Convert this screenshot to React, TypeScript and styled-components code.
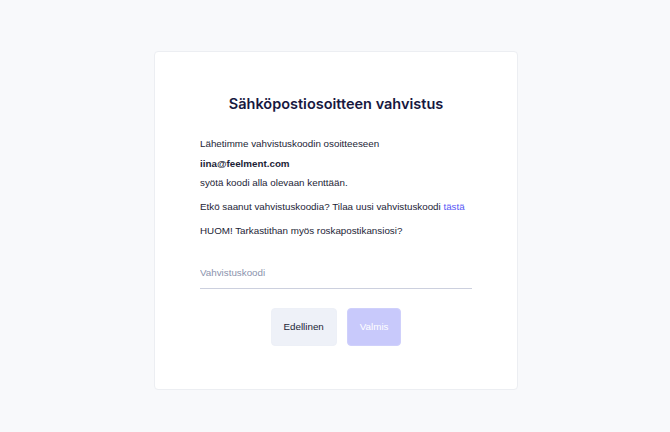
import React, { useState } from "react";
import styled, { createGlobalStyle } from "styled-components";

const GlobalStyle = createGlobalStyle`
    html, body {
        margin: 0;
        padding: 0;
        background: #f8f9fb;
    }
    body {
        font-family: "Liberation Sans", Arial, sans-serif;
    }
`;

const Page = styled.div`
    min-height: 432px;
    display: flex;
    justify-content: center;
    padding: 51px 0 0 2px;
    box-sizing: border-box;
`;

const Card = styled.div`
    width: 364px;
    height: 339px;
    box-sizing: border-box;
    background: #ffffff;
    border: 1px solid #eceef2;
    border-radius: 4px;
    padding: 40px 45px 0 45px;
    display: flex;
    flex-direction: column;
`;

const Title = styled.h1`
    margin: 0 0 18px 0;
    text-align: center;
    font-family: Inter, "Noto Sans", sans-serif;
    font-weight: 600;
    font-size: 14.5px;
    line-height: 24px;
    color: #17183f;
`;

const Paragraph = styled.p`
    margin: 0 0 4.5px 0;
    font-size: 9.8px;
    line-height: 19.5px;
    color: #1c1e36;
`;

const Email = styled.span`
    font-weight: 700;
`;

const Link = styled.a`
    color: #5758f5;
    text-decoration: none;
    cursor: pointer;
`;

const CodeInput = styled.input`
    margin-top: 18px;
    width: 100%;
    box-sizing: border-box;
    border: none;
    border-bottom: 1.5px solid #ccd0de;
    padding: 0 0 6px 0;
    font-family: "Liberation Sans", Arial, sans-serif;
    font-size: 9.8px;
    line-height: 18px;
    height: 25.5px;
    color: #1c1e36;
    outline: none;
    background: transparent;

    &::placeholder {
        color: #8b93ad;
    }
`;

const ButtonRow = styled.div`
    display: flex;
    justify-content: center;
    gap: 10px;
    margin-top: 19px;
`;

const Button = styled.button<{ $primary?: boolean }>`
    height: 38px;
    padding: 0 12px;
    border: 1px solid ${(p) => (p.$primary ? "#cfd0fb" : "#edf0f7")};
    border-radius: 4px;
    background: ${(p) => (p.$primary ? "#c8c9fb" : "#eef1f8")};
    color: ${(p) => (p.$primary ? "#ffffff" : "#1c1e36")};
    font-family: "Liberation Sans", Arial, sans-serif;
    font-size: 9.8px;
    cursor: ${(p) => (p.$primary ? "default" : "pointer")};
`;

const App: React.FC = () => {
    const [code, setCode] = useState("");

    return (
        <>
            <GlobalStyle />
            <Page>
                <Card>
                    <Title>Sähköpostiosoitteen vahvistus</Title>
                    <Paragraph>
                        Lähetimme vahvistuskoodin osoitteeseen
                        <br />
                        <Email>iina@feelment.com</Email>
                        <br />
                        syötä koodi alla olevaan kenttään.
                    </Paragraph>
                    <Paragraph>
                        Etkö saanut vahvistuskoodia? Tilaa uusi vahvistuskoodi <Link>tästä</Link>
                    </Paragraph>
                    <Paragraph>HUOM! Tarkastithan myös roskapostikansiosi?</Paragraph>
                    <CodeInput
                        placeholder="Vahvistuskoodi"
                        value={code}
                        onChange={(e) => setCode(e.target.value)}
                    />
                    <ButtonRow>
                        <Button>Edellinen</Button>
                        <Button $primary disabled={code.length === 0}>
                            Valmis
                        </Button>
                    </ButtonRow>
                </Card>
            </Page>
        </>
    );
};

export default App;
